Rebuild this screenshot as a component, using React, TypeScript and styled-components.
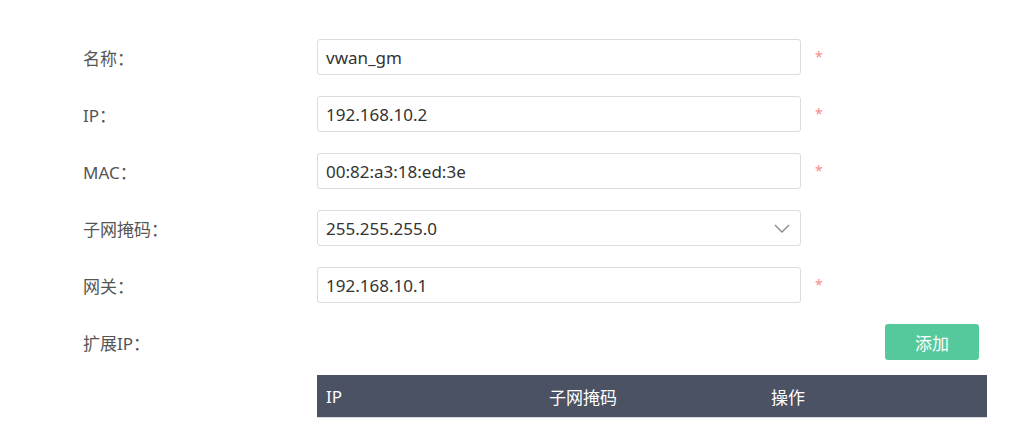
import React from 'react';
import styled, { createGlobalStyle } from 'styled-components';

const GlobalStyle = createGlobalStyle`
  body {
    margin: 0;
    background: #fff;
    font-family: "Noto Sans", "Noto Sans CJK SC", sans-serif;
  }
`;

const Form = styled.div`
  padding: 39px 0 0 83px;
  width: 904px;
`;

const Row = styled.div`
  display: flex;
  align-items: center;
  height: 36px;
  margin-bottom: 21px;
`;

const Label = styled.div`
  width: 234px;
  font-size: 17px;
  color: #555;
`;

const Field = styled.div`
  position: relative;
  width: 484px;
  height: 36px;
  box-sizing: border-box;
  border: 1px solid #dcdcdc;
  border-radius: 3px;
  display: flex;
  align-items: center;
  padding: 0 8px;
  font-size: 17px;
  color: #333;
`;

const Chevron = styled.svg`
  position: absolute;
  right: 10px;
  top: 11px;
`;

const Required = styled.span`
  margin-left: 14px;
  color: #f88a8a;
  font-size: 14px;
  line-height: 1;
`;

const ExtRow = styled.div`
  display: flex;
  align-items: center;
  justify-content: space-between;
  height: 36px;
  padding-right: 8px;
`;

const AddButton = styled.button`
  width: 94px;
  height: 36px;
  border: none;
  border-radius: 3px;
  background: #55c99b;
  color: #fff;
  font-size: 17px;
  font-family: "Noto Sans CJK SC", "Noto Sans", sans-serif;
`;

const Table = styled.div`
  margin: 15px 0 0 234px;
  width: 670px;
`;

const HeadRow = styled.div`
  display: grid;
  grid-template-columns: 223px 222px 1fr;
  height: 42px;
  background: #4b5263;
  border-bottom: 1px solid #d8d8e0;
  align-items: center;
`;

const HeadCell = styled.div`
  padding-left: 9px;
  color: #fff;
  font-size: 17px;
`;

type FieldDef = { label: string; value: string; required?: boolean; select?: boolean };

const fields: FieldDef[] = [
  { label: '名称：', value: 'vwan_gm', required: true },
  { label: 'IP：', value: '192.168.10.2', required: true },
  { label: 'MAC：', value: '00:82:a3:18:ed:3e', required: true },
  { label: '子网掩码：', value: '255.255.255.0', select: true },
  { label: '网关：', value: '192.168.10.1', required: true },
];

export default function App() {
  return (
    <>
      <GlobalStyle />
      <Form>
        {fields.map((f) => (
          <Row key={f.label}>
            <Label>{f.label}</Label>
            <Field>
              {f.value}
              {f.select && (
                <Chevron width="16" height="12" viewBox="0 0 16 12">
                  <path d="M1 3l7 7 7-7" fill="none" stroke="#888" strokeWidth="1.4" />
                </Chevron>
              )}
            </Field>
            {f.required && <Required>*</Required>}
          </Row>
        ))}
        <ExtRow>
          <Label>扩展IP：</Label>
          <AddButton>添加</AddButton>
        </ExtRow>
        <Table>
          <HeadRow>
            <HeadCell>IP</HeadCell>
            <HeadCell>子网掩码</HeadCell>
            <HeadCell>操作</HeadCell>
          </HeadRow>
        </Table>
      </Form>
    </>
  );
}
